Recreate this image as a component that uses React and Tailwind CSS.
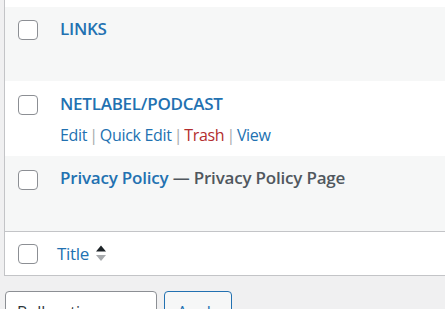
import React from 'react';

const Checkbox = () => (
  <span className="block w-[20px] h-[20px] rounded-[4px] border border-[#8c8f94] bg-white shrink-0" />
);

const Sep = () => <span className="text-[#a7aaad] px-[2px]">|</span>;

const App = () => {
  return (
    <div className="w-[445px] h-[309px] overflow-hidden bg-[#f0f0f1] font-['Open_Sans',sans-serif]">
      {/* table */}
      <div className="ml-1 border-l border-b border-[#c3c4c7] bg-white">
        <div className="h-[7px] bg-white" />

        {/* LINKS */}
        <div className="h-[74px] bg-[#f6f7f7] flex">
          <div className="w-[55px] pl-[13px] pt-[13px]">
            <Checkbox />
          </div>
          <div className="pt-[10px] text-[17px] leading-[24px] tracking-[-0.25px] font-semibold text-[#2271b1]">LINKS</div>
        </div>

        {/* NETLABEL/PODCAST */}
        <div className="h-[75px] bg-white flex">
          <div className="w-[55px] pl-[13px] pt-[14px]">
            <Checkbox />
          </div>
          <div className="pt-[11px]">
            <div className="text-[17px] leading-[24px] tracking-[-0.25px] font-semibold text-[#2271b1]">NETLABEL/PODCAST</div>
            <div className="mt-[8px] text-[16px] leading-[22px] tracking-[-0.3px] text-[#2271b1] whitespace-pre">
              Edit<Sep />Quick Edit<Sep /><span className="text-[#b32d2e]">Trash</span><Sep />View
            </div>
          </div>
        </div>

        {/* Privacy Policy */}
        <div className="h-[75px] bg-[#f6f7f7] flex">
          <div className="w-[55px] pl-[13px] pt-[14px]">
            <Checkbox />
          </div>
          <div className="pt-[10px] text-[17px] leading-[24px] tracking-[-0.2px] font-semibold">
            <span className="text-[#2271b1]">Privacy Policy</span>
            <span className="text-[#50575e]"> — Privacy Policy Page</span>
          </div>
        </div>

        {/* footer */}
        <div className="h-[44px] border-t border-[#c3c4c7] flex">
          <div className="w-[52px] pl-[13px] pt-[12px]">
            <Checkbox />
          </div>
          <div className="pt-[10px] flex items-start gap-[6px]">
            <span className="text-[17px] leading-[24px] tracking-[-0.3px] text-[#2271b1]">Title</span>
            <svg width="12" height="18" viewBox="0 0 12 18" className="mt-[2px]">
              <path d="M1 7.5 L6 1.5 L11 7.5 Z" fill="#1d2327" />
              <path d="M1 11 L11 11 L6 17 Z" fill="#a7aaad" />
            </svg>
          </div>
        </div>
      </div>

      {/* bulk actions */}
      <div className="mt-[15px] ml-[5px] flex gap-[7px]">
        <div className="w-[152px] h-[40px] rounded-[4px] border border-[#8c8f94] bg-white flex items-start justify-between pt-[9px] pl-[11px] pr-[12px] text-[16px] leading-[22px] text-[#2c3338]">
          <span>Bulk actions</span>
          <svg width="12" height="12" viewBox="0 0 12 12" className="mt-[6px]">
            <path d="M2 4 L6 8 L10 4" stroke="#50575e" strokeWidth="1.8" fill="none" />
          </svg>
        </div>
        <div className="w-[68px] h-[40px] rounded-[4px] border border-[#2271b1] bg-[#f6f7f7] flex items-start justify-center pt-[9px] text-[16px] leading-[22px] text-[#2271b1]">
          Apply
        </div>
      </div>
    </div>
  );
};

export default App;
